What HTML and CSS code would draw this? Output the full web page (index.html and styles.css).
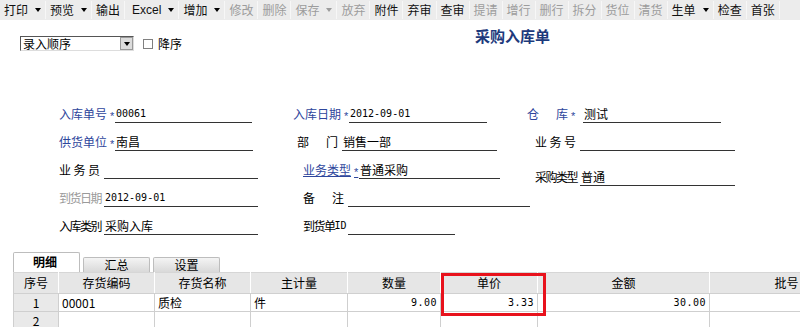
FILE: index.html
```html
<!DOCTYPE html>
<html lang="zh-CN">
<head>
  <meta charset="UTF-8" />
  <title>采购入库单</title>
  <link rel="stylesheet" href="styles.css">
</head>
<body>

  <!-- 工具栏 -->
  <div class="toolbar">
    <span class="tb">打印<i class="caret"></i></span>
    <span class="tb">预览<i class="caret"></i></span>
    <span class="tb">输出</span>
    <span class="tb sep">Excel<i class="caret"></i></span>
    <span class="tb">增加<i class="caret"></i></span>
    <span class="tb off">修改</span>
    <span class="tb off">删除</span>
    <span class="tb off">保存<i class="caret"></i></span>
    <span class="tb off">放弃</span>
    <span class="tb">附件</span>
    <span class="tb">弃审</span>
    <span class="tb">查审</span>
    <span class="tb off">提请</span>
    <span class="tb off">增行</span>
    <span class="tb off">删行</span>
    <span class="tb off">拆分</span>
    <span class="tb off">货位</span>
    <span class="tb off">清货</span>
    <span class="tb">生单<i class="caret"></i></span>
    <span class="tb">检查</span>
    <span class="tb">首张</span>
  </div>

  <!-- 排序 + 标题 -->
  <div class="head">
    <div class="sort">
      <div class="select">
        <span class="select-text">录入顺序</span>
        <span class="select-btn"><i class="caret"></i></span>
      </div>
      <span class="check"></span>
      <span>降序</span>
    </div>
    <div class="title">采购入库单</div>
  </div>

  <!-- 表头 -->
  <div class="form">
    <div class="row">
      <div class="f w234"><span class="lbl req blue">入库单号<b>*</b></span><span class="box w137 mono">00061</span></div>
      <div class="f w234"><span class="lbl req blue">入库日期<b>*</b></span><span class="box w138 mono">2012-09-01</span></div>
      <div class="f"><span class="lbl req blue"><span class="sp">仓库</span><b>*</b></span><span class="box w138">测试</span></div>
    </div>
    <div class="row">
      <div class="f w238"><span class="lbl req blue">供货单位<b>*</b></span><span class="box w138">南昌</span></div>
      <div class="f w238"><span class="lbl"><span class="sp">部门</span></span><span class="box w155">销售一部</span></div>
      <div class="f"><span class="lbl"><span class="sp">业务号</span></span><span class="box w155"></span></div>
    </div>
    <div class="row">
      <div class="f w244"><span class="lbl"><span class="sp">业务员</span></span><span class="box w154"></span></div>
      <div class="f w232"><span class="lbl req blue link">业务类型<b>*</b></span><span class="box w141">普通采购</span></div>
      <div class="f low"><span class="lbl tight">采购类型</span><span class="box w155">普通</span></div>
    </div>
    <div class="row">
      <div class="f w244"><span class="lbl tight gray">到货日期</span><span class="box w154 mono">2012-09-01</span></div>
      <div class="f"><span class="lbl"><span class="sp">备注</span></span><span class="box w182"></span></div>
    </div>
    <div class="row">
      <div class="f w244"><span class="lbl tight">入库类别</span><span class="box w154">采购入库</span></div>
      <div class="f"><span class="lbl tight">到货单<span class="mono">ID</span></span><span class="box w107"></span></div>
    </div>
  </div>

  <!-- 页签 -->
  <div class="tabs">
    <span class="tab active">明细</span>
    <span class="tab">汇总</span>
    <span class="tab">设置</span>
  </div>

  <!-- 表体 -->
  <div class="grid-wrap">
    <table class="grid">
      <colgroup>
        <col class="c-no"><col class="c-96"><col class="c-96"><col class="c-97">
        <col class="c-93"><col class="c-97"><col class="c-172"><col class="c-rest">
      </colgroup>
      <tr class="hd">
        <th>序号</th><th>存货编码</th><th>存货名称</th><th>主计量</th>
        <th>数量</th><th>单价</th><th>金额</th><th>批号</th>
      </tr>
      <tr>
        <td class="no">1</td><td>00001</td><td>质检</td><td>件</td>
        <td class="num">9.00</td><td class="num">3.33</td><td class="num">30.00</td><td></td>
      </tr>
      <tr>
        <td class="no">2</td><td></td><td></td><td></td>
        <td></td><td></td><td></td><td></td>
      </tr>
    </table>
    <div class="mark"></div>
  </div>

</body>
</html>
```

FILE: styles.css
```css
/* 基本 */
* {
  box-sizing: border-box;
  margin: 0;
  padding: 0;
}

html, body {
  width: 800px;
  height: 327px;
  overflow: hidden;
  background: #fff;
  color: #000;
  font-family: "Noto Sans CJK SC", "Liberation Sans", sans-serif;
  font-size: 12px;
  line-height: 14px;
}

i { font-style: normal; }
b { font-weight: normal; }

.caret {
  display: inline-block;
  width: 0;
  height: 0;
  border-left: 3px solid transparent;
  border-right: 3px solid transparent;
  border-top: 4px solid #000;
  vertical-align: middle;
}

/* 工具栏 */
.toolbar {
  height: 20px;
  background: #ececec;
  display: flex;
  align-items: center;
  white-space: nowrap;
  overflow: hidden;
}

.tb {
  display: flex;
  align-items: center;
  height: 18px;
  padding: 0 4px;
  border-right: 1px solid #f7f7f7;
  color: #111;
}

.tb .caret {
  margin-left: 7px;
}

.tb.off {
  color: #9c9c9c;
}

.tb.off .caret {
  border-top-color: #9c9c9c;
}

.tb.sep {
  font-family: "Liberation Sans", sans-serif;
  padding-left: 7px;
}

/* 排序 + 标题 */
.head {
  display: flex;
  align-items: flex-start;
  padding-top: 8px;
  height: 30px;
}

.sort {
  display: flex;
  align-items: center;
  margin-top: 8px;
  margin-left: 20px;
}

.select {
  display: flex;
  width: 114px;
  height: 15px;
  border-top: 1px solid #555;
  border-left: 1px solid #555;
  border-right: 1px solid #ddd;
  border-bottom: 1px solid #ddd;
}

.select-text {
  flex: 1;
  padding-left: 2px;
  line-height: 13px;
}

.select-btn {
  width: 13px;
  height: 13px;
  background: #dcdcdc;
  border: 1px solid #999;
  display: flex;
  align-items: center;
  justify-content: center;
}

.check {
  width: 10px;
  height: 10px;
  border: 1px solid #808080;
  margin: 0 5px 0 9px;
}

.title {
  margin-left: 293px;
  font-size: 15px;
  line-height: 16px;
  font-weight: bold;
  color: #1d3a7c;
}

/* 表头字段 */
.form {
  margin-top: 45px;
}

.row {
  display: flex;
  align-items: flex-end;
  height: 28px;
  padding-left: 59px;
}

.f {
  display: flex;
  align-items: flex-end;
}

.f.low {
  transform: translateY(7px);
}

.w232 { width: 232px; }
.w234 { width: 234px; }
.w238 { width: 238px; }
.w244 { width: 244px; }

.lbl {
  width: 45px;
  display: flex;
  align-items: flex-end;
  line-height: 14px;
  padding-bottom: 2px;
  white-space: nowrap;
}

.lbl.req {
  width: 56px;
}

.lbl.tight {
  letter-spacing: -1.5px;
}

.lbl b {
  margin-left: 3px;
  font-family: "Liberation Sans", sans-serif;
  font-size: 11px;
  transform: translateY(2px);
}

.sp {
  display: inline-block;
  width: 41px;
  text-align: justify;
  text-align-last: justify;
}

.blue { color: #2e469c; }
.gray { color: #9a9a9a; }
.link { text-decoration: underline; }

.box {
  height: 16px;
  border-bottom: 1px solid #333;
  line-height: 14px;
  padding-left: 1px;
  white-space: nowrap;
}

.mono {
  font-family: "DejaVu Sans Mono", monospace;
  font-size: 10px;
  letter-spacing: 0;
}

.w107 { width: 107px; }
.w137 { width: 137px; }
.w138 { width: 138px; }
.w141 { width: 141px; }
.w154 { width: 154px; }
.w155 { width: 155px; }
.w182 { width: 182px; }

/* 页签 */
.tabs {
  display: flex;
  align-items: flex-end;
  gap: 3px;
  height: 20px;
  margin-top: 17px;
  padding-left: 13px;
}

.tab {
  width: 67px;
  height: 15px;
  text-align: center;
  line-height: 14px;
  background: linear-gradient(#f4f4f4, #d9d9d9);
  border: 1px solid #bdbdbd;
  border-bottom: none;
  border-radius: 2px 2px 0 0;
}

.tab.active {
  height: 20px;
  line-height: 18px;
  background: #fff;
  font-weight: bold;
  text-align: left;
  padding-left: 19px;
}

/* 表体 */
.grid-wrap {
  position: relative;
  margin-left: 13px;
  width: 787px;
  overflow: hidden;
}

.grid {
  border-collapse: collapse;
  table-layout: fixed;
  width: 850px;
  border-top: 1px solid #c4c4c4;
}

.c-no { width: 45px; }
.c-96 { width: 96px; }
.c-97 { width: 97px; }
.c-93 { width: 93px; }
.c-172 { width: 172px; }
.c-rest { width: 154px; }

.grid th, .grid td {
  border: 1px solid #cfcfcf;
  height: 18px;
  padding: 0 3px;
  line-height: 16px;
  white-space: nowrap;
  overflow: hidden;
}

.grid tr.hd th {
  height: 21px;
  background: #e6e6e6;
  font-weight: normal;
  border-color: #d6d6d6 #fff #d0d0d0 #fff;
  border-left: 1px solid #cfcfcf;
}

.grid td.no {
  background: #e9e9e9;
  text-align: center;
}

.grid td.num {
  text-align: right;
  font-family: "DejaVu Sans Mono", monospace;
  font-size: 10px;
  letter-spacing: 0.5px;
}

/* 批注红框 */
.mark {
  position: absolute;
  left: 428px;
  top: 1px;
  width: 105px;
  height: 43px;
  border: 3px solid #e8121c;
}
```
